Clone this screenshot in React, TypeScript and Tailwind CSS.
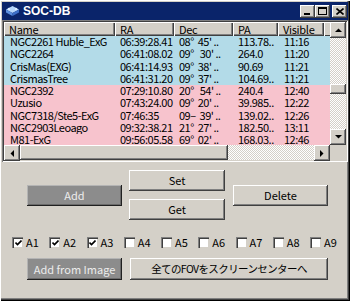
const rows = [
  { name: "NGC2261 Huble_ExG", ra: "06:39:28.41", dec: "08°  45' ..", pa: "113.78..", vis: "11:16", blue: true },
  { name: "NGC2264", ra: "06:41:08.02", dec: "09°   30' ..", pa: "264.0", vis: "11:20", blue: true },
  { name: "CrisMas(EXG)", ra: "06:41:14.93", dec: "09°  38' ..", pa: "90.69", vis: "11:21", blue: true },
  { name: "CrismasTree", ra: "06:41:31.20", dec: "09°  37' ..", pa: "104.69..", vis: "11:21", blue: true },
  { name: "NGC2392", ra: "07:29:10.80", dec: "20°   54' ..", pa: "240.4", vis: "12:40", blue: false },
  { name: "Uzusio", ra: "07:43:24.00", dec: "09°  20' ..", pa: "39.985..", vis: "12:22", blue: false },
  { name: "NGC7318/Ste5-ExG", ra: "07:46:35", dec: "09–  39' ..", pa: "139.02..", vis: "12:26", blue: false },
  { name: "NGC2903Leoago", ra: "09:32:38.21", dec: "21°  27' ..", pa: "182.50..", vis: "13:11", blue: false },
  { name: "M81-ExG", ra: "09:56:05.58", dec: "69°  02' ..", pa: "168.03..", vis: "12:46", blue: false },
];

const checks = [
  { label: "A1", on: true },
  { label: "A2", on: true },
  { label: "A3", on: true },
  { label: "A4", on: false },
  { label: "A5", on: false },
  { label: "A6", on: false },
  { label: "A7", on: false },
  { label: "A8", on: false },
  { label: "A9", on: false },
];

const raised =
  "bg-[#d4d0c8] shadow-[inset_-1px_-1px_#404040,inset_1px_1px_#ffffff,inset_-2px_-2px_#808080,inset_2px_2px_#d4d0c8]";
const dither =
  "bg-[repeating-conic-gradient(#d4d0c8_0%_25%,#ffffff_0%_50%)] bg-size-[2px_2px]";

function Arrow({ dir }: { dir: "up" | "down" | "left" | "right" }) {
  const pts = {
    up: "0,4 7,4 3.5,0.5",
    down: "0,0 7,0 3.5,3.5",
    left: "4,0 4,7 0.5,3.5",
    right: "0,0 0,7 3.5,3.5",
  }[dir];
  const vert = dir === "up" || dir === "down";
  return (
    <div className={`${raised} w-[16px] h-[16px] shrink-0 flex items-center justify-center`}>
      <svg width={vert ? 7 : 4} height={vert ? 4 : 7} viewBox={vert ? "0 0 7 4" : "0 0 4 7"}>
        <polygon points={pts} fill="#000" />
      </svg>
    </div>
  );
}

function Button({ children, dark, className = "" }: { children: React.ReactNode; dark?: boolean; className?: string }) {
  return (
    <div
      className={`${className} flex items-center justify-center text-[11px] ${
        dark
          ? "bg-[#8c8c8c] text-[#ececec] shadow-[inset_-1px_-1px_#202020,inset_1px_1px_#b4b4b4,inset_-2px_-2px_#6a6a6a]"
          : `${raised} text-black`
      }`}
    >
      {children}
    </div>
  );
}

export default function App() {
  return (
    <div className="w-[350px] h-[301px] bg-[#d4d0c8] px-[2px] pt-[2px] flex flex-col font-['Noto_Sans_CJK_JP',sans-serif] shadow-[inset_1px_1px_#ffffff,inset_-1px_-1px_#000000,inset_-2px_-2px_#404040,inset_-3px_-3px_#808080] overflow-hidden">
      {/* Title bar */}
      <div className="h-[18px] bg-[#0a246a] flex items-center pl-[3px] pr-[1px] shrink-0">
        <svg width="15" height="12" viewBox="0 0 15 12" className="mr-[3px]">
          <polygon points="7.5,1 14,4.5 7.5,8 1,4.5" fill="#b6d6fb" />
          <polygon points="1,4.5 7.5,8 7.5,11 1,7.5" fill="#5b8fe0" />
          <polygon points="14,4.5 7.5,8 7.5,11 14,7.5" fill="#3d6fc8" />
          <circle cx="4" cy="4" r="1.2" fill="#dcecff" />
          <circle cx="11" cy="4" r="1.2" fill="#dcecff" />
        </svg>
        <span className="text-white font-bold text-[12px] font-['Liberation_Sans',sans-serif] leading-none">
          SOC-DB
        </span>
        <div className="ml-auto flex items-center">
          <div className={`${raised} w-[15px] h-[13px] flex items-end pl-[4px] pb-[3px]`}>
            <div className="w-[6px] h-[2px] bg-black" />
          </div>
          <div className={`${raised} w-[15px] h-[13px] flex items-center justify-center`}>
            <div className="w-[9px] h-[8px] border border-black border-t-2" />
          </div>
          <div className={`${raised} w-[15px] h-[13px] ml-[2px] flex items-center justify-center`}>
            <svg width="8" height="7" viewBox="0 0 8 7">
              <path d="M0.5 0.5 L7.5 6.5 M7.5 0.5 L0.5 6.5" stroke="#000" strokeWidth="1.6" />
            </svg>
          </div>
        </div>
      </div>

      {/* List view */}
      <div className="h-[142px] shrink-0 bg-[#d4d0c8] p-[2px] shadow-[inset_1px_1px_#808080,inset_-1px_-1px_#ffffff,inset_2px_2px_#404040,inset_-2px_-2px_#d4d0c8] flex flex-col">
        <div className="flex h-[123px]">
          <div className="flex-1 flex flex-col overflow-hidden bg-white">
            {/* Header */}
            <div className="flex h-[14px] shrink-0 text-[11px] text-black leading-[14px] tracking-[-0.3px] bg-[#d4d0c8]">
              {[
                ["Name", "w-[111px]"],
                ["RA", "w-[59px]"],
                ["Dec", "w-[59px]"],
                ["PA", "w-[45px]"],
                ["Visible", "w-[46px]"],
              ].map(([t, w]) => (
                <div
                  key={t}
                  className={`${w} shrink-0 pl-[5px] shadow-[inset_1px_1px_#ffffff,inset_-1px_-1px_#404040,inset_-2px_-2px_#808080]`}
                >
                  {t}
                </div>
              ))}
              <div className="flex-1 shadow-[inset_1px_1px_#ffffff,inset_0_-1px_#404040]" />
            </div>
            {/* Rows */}
            <div className="flex-1 overflow-hidden">
              {rows.map((r) => (
                <div
                  key={r.name}
                  className={`flex h-[12.3px] text-[11px] leading-[10px] tracking-[-0.5px] text-black whitespace-pre ${
                    r.blue ? "bg-[#b3dbe8]" : "bg-[#f7c3cd]"
                  }`}
                >
                  <div className="w-[111px] shrink-0 pl-[6px] overflow-hidden h-full">{r.name}</div>
                  <div className="w-[59px] shrink-0 pl-[5px] overflow-hidden h-full">{r.ra}</div>
                  <div className="w-[59px] shrink-0 pl-[5px] overflow-hidden h-full">{r.dec}</div>
                  <div className="w-[45px] shrink-0 pl-[5px] overflow-hidden h-full">{r.pa}</div>
                  <div className="w-[46px] shrink-0 pl-[6px] overflow-hidden h-full">{r.vis}</div>
                  <div className="flex-1" />
                </div>
              ))}
            </div>
          </div>
          {/* Vertical scrollbar */}
          <div className={`w-[16px] flex flex-col ${dither}`}>
            <Arrow dir="up" />
            <div className="flex-1 flex flex-col">
              <div className="h-[46px]" />
              <div className={`${raised} h-[10px]`} />
            </div>
            <Arrow dir="down" />
          </div>
        </div>
        {/* Horizontal scrollbar */}
        <div className="flex h-[15px]">
          <div className={`flex-1 flex ${dither}`}>
            <Arrow dir="left" />
            <div className={`${raised} w-[208px] h-[15px]`} />
            <div className="flex-1" />
            <Arrow dir="right" />
          </div>
          <div className="w-[16px] bg-[#d4d0c8]" />
        </div>
      </div>

      {/* Buttons */}
      <div className="flex items-center mt-[8px] pl-[25px] shrink-0">
        <Button dark className="w-[95px] h-[21px]">Add</Button>
        <div className="flex flex-col gap-[8px] ml-[7px]">
          <Button className="w-[96px] h-[21px]">Set</Button>
          <Button className="w-[96px] h-[21px]">Get</Button>
        </div>
        <Button className="w-[95px] h-[21px] ml-[8px]">Delete</Button>
      </div>

      {/* Checkboxes */}
      <div className="flex items-center mt-[16px] pl-[10px] h-[12px] shrink-0">
        {checks.map((c) => (
          <div key={c.label} className="w-[37.25px] shrink-0 flex items-center">
            <div className="w-[10px] h-[10px] bg-white shadow-[inset_1px_1px_#404040,inset_-1px_-1px_#d4d0c8] border-t border-l border-[#808080] border-r-white border-b-white box-content flex items-center justify-center">
              {c.on && (
                <svg width="7" height="6" viewBox="0 0 7 6">
                  <polyline points="0.5,2.5 2.5,4.5 6.5,0.5" fill="none" stroke="#000" strokeWidth="1.6" />
                </svg>
              )}
            </div>
            <span className="ml-[3px] text-[11px] leading-none text-black">{c.label}</span>
          </div>
        ))}
      </div>

      {/* Bottom buttons */}
      <div className="flex items-center mt-[10px] pl-[25px] shrink-0">
        <Button dark className="w-[95px] h-[22px]">Add from Image</Button>
        <Button className="w-[198px] h-[22px] ml-[8px] tracking-[-0.6px] !text-[10.5px]">
          全てのFOVをスクリーンセンターへ
        </Button>
      </div>
    </div>
  );
}
